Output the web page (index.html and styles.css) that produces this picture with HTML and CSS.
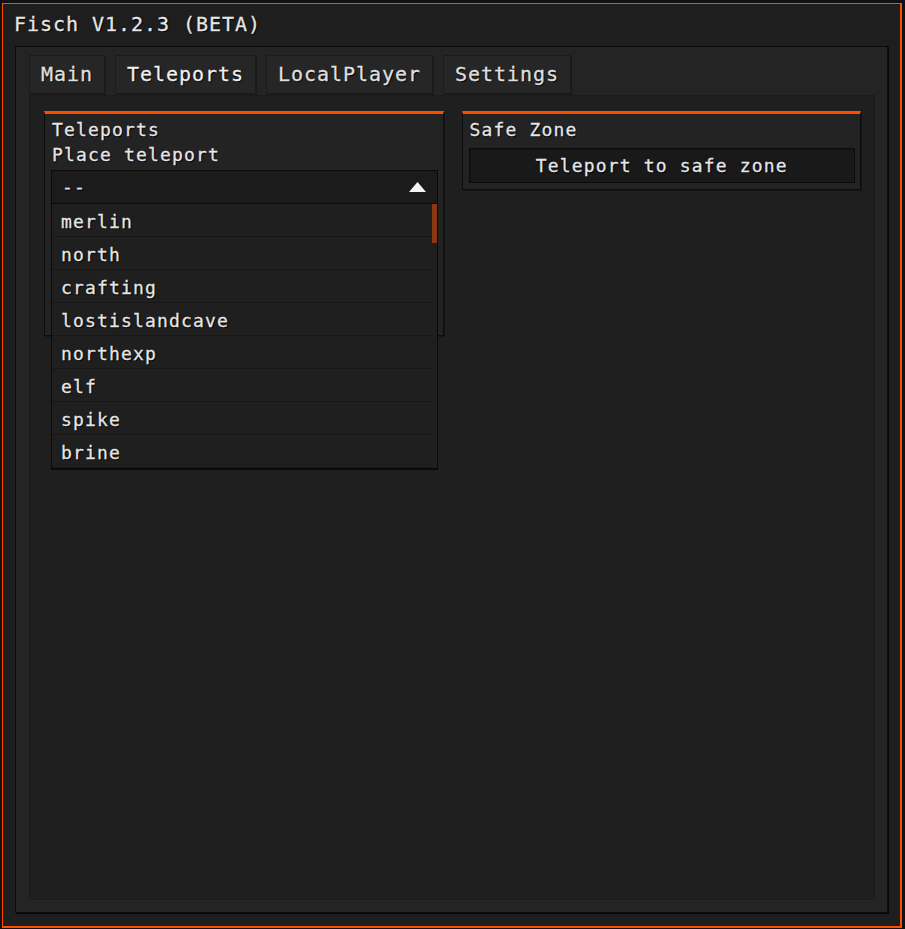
FILE: index.html
```html
<!DOCTYPE html>
<html>
<head>
	<meta charset="utf-8" />
	<title>Fisch V1.2.3 (BETA)</title>
	<link rel="stylesheet" href="styles.css">
</head>
<body>
<div class="window">
	<div class="title">Fisch V1.2.3 (BETA)</div>
	<div class="frame">
		<div class="tabs">
			<div class="tab">Main</div>
			<div class="tab active">Teleports</div>
			<div class="tab">LocalPlayer</div>
			<div class="tab">Settings</div>
		</div>
		<div class="panel">
			<!-- 左边: 传送 -->
			<div class="group group-tp">
				<div class="label">Teleports</div>
				<div class="label">Place teleport</div>
				<div class="combo">
					<div class="combo-head">
						<span>--</span>
						<svg class="arrow" width="17" height="10" viewBox="0 0 17 10"><polygon points="8.5,0 17,10 0,10" fill="#f4f4f4"/></svg>
					</div>
					<div class="combo-list">
						<ul class="items">
							<li>merlin</li>
							<li>north</li>
							<li>crafting</li>
							<li>lostislandcave</li>
							<li>northexp</li>
							<li>elf</li>
							<li>spike</li>
							<li>brine</li>
						</ul>
						<div class="scroll"><div class="thumb"></div></div>
					</div>
				</div>
			</div>
			<!-- 右边: 安全区 -->
			<div class="group group-safe">
				<div class="label">Safe Zone</div>
				<div class="button">Teleport to safe zone</div>
			</div>
		</div>
	</div>
</div>
</body>
</html>
```

FILE: styles.css
```css
*{
margin:0;
padding:0;
box-sizing:border-box;}
body{
background:#111111;
font-family:"DejaVu Sans Mono", "Liberation Mono", monospace;
color:#e6e6e6;
text-shadow:0 0 1px #000, 1px 1px 1px #000;
-webkit-text-stroke:0.3px #e6e6e6;
}
.window{
width:900px;
height:925px;
margin:3px 0 0 2px;
background:#1e1e1e;
border:solid #ff4d00;
border-width:1px 2px 2px 1px;
display:flex;
flex-direction:column;
}
.title{
height:42px;
padding:9px 0 0 11px;
font-size:20px;
line-height:22px;
letter-spacing:0.96px;
}
.frame{
flex:1;
margin:0 12px 13px 12px;
background:#242424;
border:1px solid #0b0b0b;
box-shadow:1px 1px 0 #050505;
padding:8px 12px 12px 13px;
display:flex;
flex-direction:column;
}
.tabs{
display:flex;
gap:10px;
margin-bottom:1px;
}
.tab{
height:39px;
padding:7px 11px 0 11px;
background:#262626;
border:1px solid #1b1b1b;
box-shadow:1px 1px 0 #1a1a1a;
font-size:20px;
line-height:22px;
letter-spacing:0.96px;
color:#dedede;
}
.tab.active{
color:#f2f2f2;
}
.panel{
flex:1;
background:#1f1f1f;
border:1px solid #1b1b1b;
padding:15px 13px 0 14px;
display:grid;
grid-template-columns:1fr 1fr;
gap:18px;
align-items:start;
font-size:18px;
letter-spacing:1.16px;
}
.group{
background:#232323;
border:1px solid #0c0c0c;
border-top:3px solid #ff4d00;
box-shadow:1px 1px 0 #151515;
padding:3px 5px 6px 6px;
}
.group-tp{
height:225px;
}
.label{
line-height:25px;
padding-left:1px;
}
.combo{
position:relative;
margin-top:3px;
}
.combo-head{
height:34px;
background:#1b1b1b;
border:1px solid #0a0a0a;
padding:0 11px 0 10px;
display:flex;
align-items:center;
justify-content:space-between;
line-height:32px;
}
.arrow{
display:block;
}
/* 下拉列表 盖在下面的内容上 */
.combo-list{
position:absolute;
top:100%;
left:0;
width:100%;
z-index:2;
background:#1f1f1f;
border:1px solid #0a0a0a;
border-top:0;
border-bottom-width:2px;
display:flex;
}
.items{
flex:1;
list-style:none;
}
.items li{
height:33px;
padding:4px 0 0 9px;
line-height:28px;
border-bottom:1px solid #171717;
}
.scroll{
width:5px;
}
.thumb{
height:39px;
background:#8a3912;
}
.button{
margin-top:6px;
height:35px;
background:#191919;
border:1px solid #0b0b0b;
box-shadow:inset 1px 1px 0 #141414;
text-align:center;
line-height:33px;
}
```
